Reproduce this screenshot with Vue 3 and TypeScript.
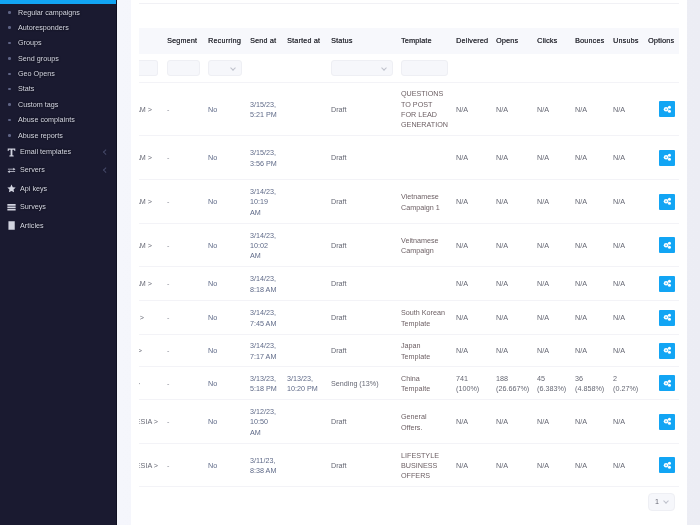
<script setup lang="ts">
interface Row {
  name: string; pad: number; h: number; send: string; started?: string; status: string; template?: string;
  stats: string[];
}
const na = ['N/A', 'N/A', 'N/A', 'N/A', 'N/A'];
const rows: Row[] = [
  { name: 'VIETNAM >', pad: 11, h: 53, send: '3/15/23, 5:21 PM', status: 'Draft', template: 'QUESTIONS TO POST FOR LEAD GENERATION', stats: na },
  { name: 'VIETNAM >', pad: 11, h: 44, send: '3/15/23, 3:56 PM', status: 'Draft', stats: na },
  { name: 'VIETNAM >', pad: 11, h: 44, send: '3/14/23, 10:19 AM', status: 'Draft', template: 'Vietnamese Campaign 1', stats: na },
  { name: 'VIETNAM >', pad: 11, h: 43, send: '3/14/23, 10:02 AM', status: 'Draft', template: 'Veitnamese Campaign', stats: na },
  { name: 'VIETNAM >', pad: 11, h: 34, send: '3/14/23, 8:18 AM', status: 'Draft', stats: na },
  { name: 'KOREA >', pad: 19, h: 34, send: '3/14/23, 7:45 AM', status: 'Draft', template: 'South Korean Template', stats: na },
  { name: 'JAPAN >', pad: 21, h: 32, send: '3/14/23, 7:17 AM', status: 'Draft', template: 'Japan Template', stats: na },
  { name: 'CHINA >', pad: 23, h: 33, send: '3/13/23, 5:18 PM', started: '3/13/23, 10:20 PM', status: 'Sending (13%)', template: 'China Tempalte', stats: ['741 (100%)', '188 (26.667%)', '45 (6.383%)', '36 (4.858%)', '2 (0.27%)'] },
  { name: 'INDONESIA >', pad: 5, h: 44, send: '3/12/23, 10:50 AM', status: 'Draft', template: 'General Offers.', stats: na },
  { name: 'INDONESIA >', pad: 5, h: 43, send: '3/11/23, 8:38 AM', status: 'Draft', template: 'LIFESTYLE BUSINESS OFFERS', stats: na },
];
const subItems = ['Regular campaigns', 'Autoresponders', 'Groups', 'Send groups', 'Geo Opens', 'Stats', 'Custom tags', 'Abuse complaints', 'Abuse reports'];
const headers = ['', 'Segment', 'Recurring', 'Send at', 'Started at', 'Status', 'Template', 'Delivered', 'Opens', 'Clicks', 'Bounces', 'Unsubs', 'Options'];
const widths = [24, 41, 42, 37, 44, 70, 55, 40, 41, 38, 38, 35, 35];
</script>

<template>
  <div class="page">
    <aside class="sidebar">
      <div class="active-strip"></div>
      <ul class="sub">
        <li v-for="s in subItems" :key="s"><i class="dot"></i>{{ s }}</li>
      </ul>
      <ul class="top">
        <li>
          <svg viewBox="0 0 10 10" class="ico"><path d="M.8.6h8.4v2.6H8.3L7.9 1.9H6v6.2l1.4.3v1H2.6v-1L4 8.1V1.9H2.1l-.4 1.3H.8z" fill="#d2d4e0"/></svg>
          <span>Email templates</span><em class="caret"></em>
        </li>
        <li>
          <svg viewBox="0 0 10 10" class="ico"><path d="M1 3h6V2l2.4 1.5L7 5V4H1zM9 5.8H3v-1L.6 6.3 3 7.8v-1h6z" fill="#d2d4e0"/></svg>
          <span>Servers</span><em class="caret"></em>
        </li>
        <li>
          <svg viewBox="0 0 10 10" class="ico"><path d="M5 .6l1.4 2.9 3.2.4-2.3 2.2.6 3.2L5 7.8 2.1 9.3l.6-3.2L.4 3.9l3.2-.4z" fill="#d2d4e0"/></svg>
          <span>Api keys</span>
        </li>
        <li>
          <svg viewBox="0 0 10 10" class="ico"><path d="M.4 1.2h9.2v1.9H.4zM.4 3.9h9.2v1.6H.4zM.4 6.3h9.2v1.9H.4z" fill="#d2d4e0"/></svg>
          <span>Surveys</span>
        </li>
        <li>
          <svg viewBox="0 0 10 10" class="ico"><path d="M1.6.4h7v9.2h-7z" fill="#d2d4e0"/></svg>
          <span>Articles</span>
        </li>
      </ul>
    </aside>
    <main class="main">
      <section class="card">
        <div class="rule"></div>
        <table class="grid">
          <colgroup><col v-for="(w, i) in widths" :key="i" :style="{ width: w + 'px' }" /></colgroup>
          <thead>
            <tr class="head"><th v-for="h in headers" :key="h">{{ h }}</th></tr>
            <tr class="filters">
              <td class="first"><div class="field clipped"></div></td>
              <td><div class="field"></div></td>
              <td><div class="field sel"><i class="chev"></i></div></td>
              <td></td>
              <td></td>
              <td><div class="field sel"><i class="chev"></i></div></td>
              <td><div class="field"></div></td>
              <td colspan="6"></td>
            </tr>
          </thead>
          <tbody>
            <tr v-for="(r, i) in rows" :key="i" :style="{ height: r.h + 'px' }">
              <td class="first"><div class="name" :style="{ paddingRight: r.pad + 'px' }">{{ r.name }}</div></td>
              <td class="muted">-</td>
              <td class="link">No</td>
              <td class="link">{{ r.send }}</td>
              <td class="link">{{ r.started }}</td>
              <td>{{ r.status }}</td>
              <td class="tpl">{{ r.template }}</td>
              <td v-for="(s, j) in r.stats" :key="j">{{ s }}</td>
              <td class="opt">
                <button class="btn" type="button" aria-label="Options">
                  <svg viewBox="0 0 10 10" width="8.5" height="8.5"><circle cx="3.6" cy="5" r="2.7" fill="#fff"/><circle cx="7.6" cy="2.6" r="1.8" fill="#fff"/><circle cx="7.6" cy="7.4" r="1.8" fill="#fff"/><circle cx="3.6" cy="5" r=".8" fill="#12a5f4"/></svg>
                </button>
              </td>
            </tr>
          </tbody>
        </table>
        <div class="pager">
          <div class="pg"><span>1</span><i class="chev"></i></div>
        </div>
      </section>
    </main>
  </div>
</template>

<style>
html, body { margin: 0; overflow: hidden; }
</style>

<style scoped>
.page {
  display: flex;
  width: 700px;
  height: 525px;
  overflow: hidden;
  font-family: "Liberation Sans", Arial, sans-serif;
  font-size: 7.2px;
  line-height: 10.3px;
  color: #666874;
  filter: blur(0.25px);
}
.sidebar {
  width: 117px;
  flex: none;
  background: #1a1a30;
  border-right: 1px solid #101022;
  box-sizing: border-box;
  color: #d6d8e6;
  text-shadow: 0 0 2px #000;
}
.active-strip { height: 4px; background: #12a5f4; }
ul { list-style: none; margin: 0; padding: 0; }
.sub { padding-top: 0.5px; }
.sub li {
  height: 15.4px;
  line-height: 15.4px;
  padding-left: 18px;
  position: relative;
  white-space: nowrap;
}
.dot {
  position: absolute;
  left: 8px;
  top: 6.5px;
  width: 2.5px;
  height: 2.5px;
  border-radius: 50%;
  background: #5f6485;
}
.top li {
  height: 18.4px;
  display: flex;
  align-items: center;
  gap: 4px;
  padding-left: 7px;
  position: relative;
  white-space: nowrap;
}
.ico { width: 9px; height: 9px; flex: none; }
.caret {
  position: absolute;
  right: 9px;
  top: 7px;
  width: 2.5px;
  height: 2.5px;
  border-left: 1px solid #454968;
  border-bottom: 1px solid #454968;
  transform: rotate(45deg);
}
.main {
  flex: 1;
  display: flex;
  background: linear-gradient(90deg, #f5f6fc, #ecedf4);
  padding: 0 13px 0 14px;
  min-width: 0;
}
.card {
  flex: 1;
  background: #fff;
  padding: 0 8px;
  min-width: 0;
}
.rule { height: 1px; margin-top: 3px; margin-bottom: 24px; background: #f1f1f5; }
.grid {
  table-layout: fixed;
  width: 540px;
  border-collapse: collapse;
}
.grid th {
  text-align: left;
  font-weight: 400;
  color: #33343c;
  padding: 1px 4px 0;
  height: 26px;
  box-sizing: border-box;
  background: #f7f8fc;
  white-space: nowrap;
  letter-spacing: 0.2px;
  text-shadow: 0.15px 0 0 #33343c;
}
.filters td { height: 28px; padding: 0 4px; border-bottom: 1px solid #f3f3f7; box-sizing: border-box; }
.filters td.first { padding: 0 5px 0 0; }
.field {
  height: 16px;
  box-sizing: border-box;
  background: #f6f7fb;
  border: 1px solid #eeeff4;
  border-radius: 3px;
  position: relative;
}
.clipped { border-left: 0; border-radius: 0 3px 3px 0; }
.chev {
  position: absolute;
  right: 6px;
  top: 5px;
  width: 3px;
  height: 3px;
  border-right: 1px solid #bec1cb;
  border-bottom: 1px solid #bec1cb;
  transform: rotate(45deg);
}
tbody td {
  padding: 3px 4px 0;
  border-bottom: 1px solid #f3f3f7;
  box-sizing: border-box;
  vertical-align: middle;
}
tbody td.first { padding: 3px 0 0; }
.name {
  display: flex;
  justify-content: flex-end;
  overflow: hidden;
  white-space: nowrap;
}
.link { color: #5f6a88; }
.muted { color: #8a8d98; }
.tpl { color: #6c5f63; }
.opt { text-align: right; }
.btn {
  display: inline-flex;
  align-items: center;
  justify-content: center;
  width: 16px;
  height: 16px;
  margin-top: -2px;
  padding: 0;
  border: 0;
  border-radius: 1px;
  background: #12a5f4;
  vertical-align: middle;
}
.pager { display: flex; justify-content: flex-end; padding: 6px 4px 0 0; }
.pg {
  width: 27px;
  height: 18px;
  box-sizing: border-box;
  background: #f6f7fb;
  border: 1px solid #eeeff4;
  border-radius: 4px;
  position: relative;
  padding-left: 6px;
  line-height: 15px;
}
</style>
